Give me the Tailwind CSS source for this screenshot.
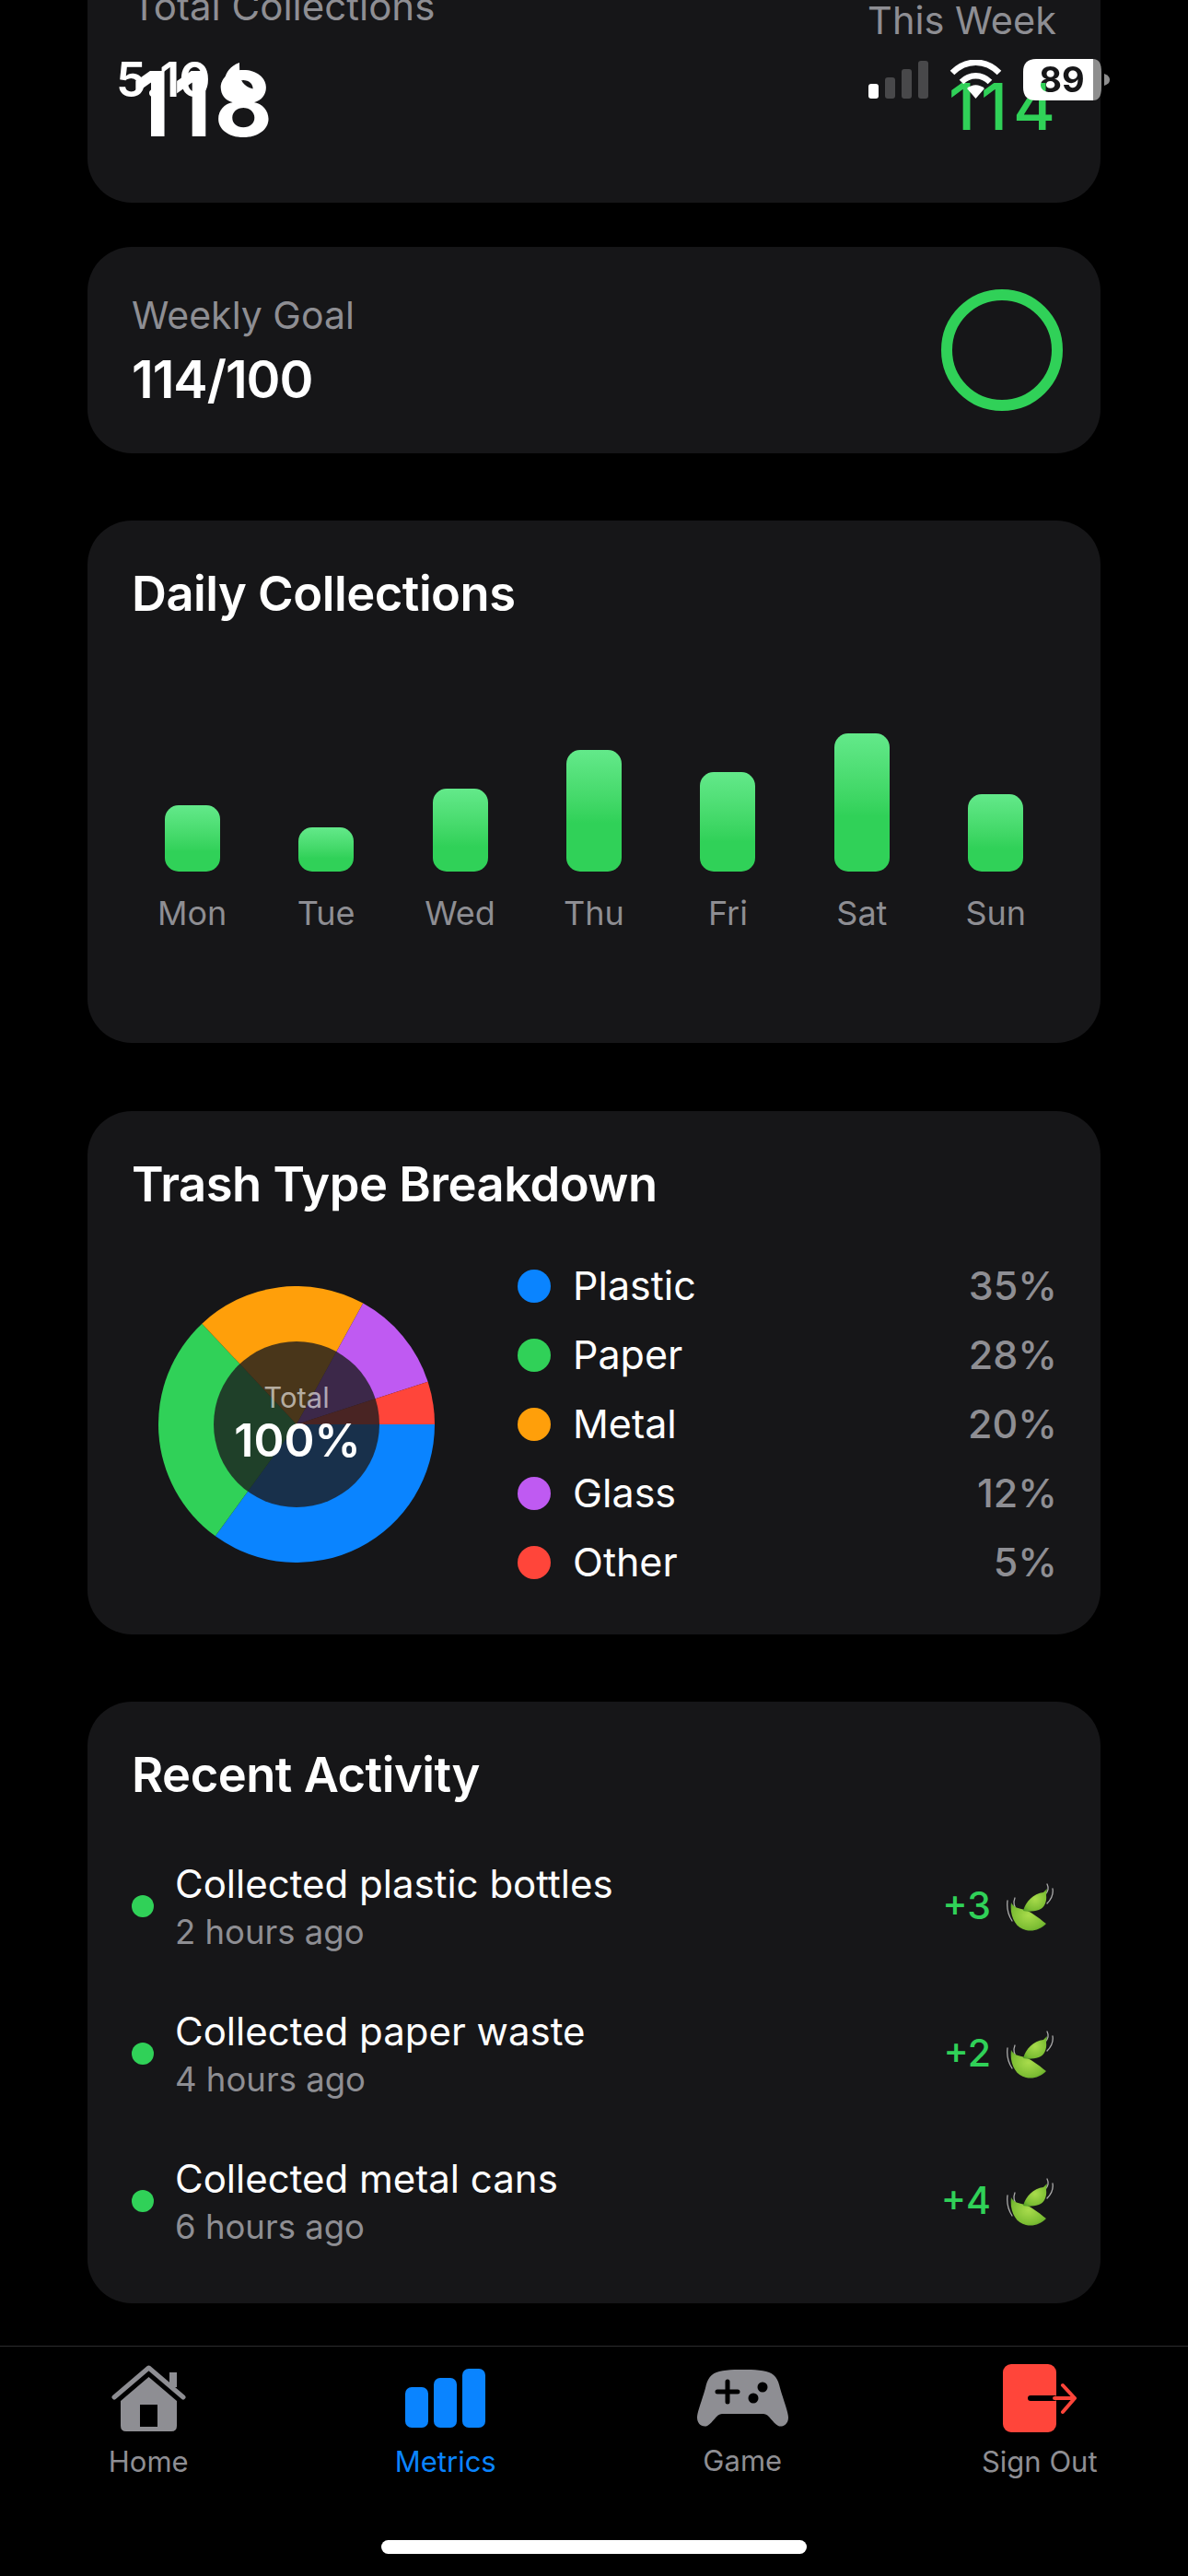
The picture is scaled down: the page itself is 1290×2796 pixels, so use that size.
<!DOCTYPE html>
<html lang="en">
<head>
<meta charset="utf-8">
<script src="https://cdn.jsdelivr.net/npm/@tailwindcss/browser@4"></script>
<title>Metrics</title>
</head>
<body class="bg-black">
<svg class="absolute w-0 h-0" aria-hidden="true">
  <defs>
    <radialGradient id="leafg" cx="0.5" cy="0.45" r="0.7">
      <stop offset="0" stop-color="#a9dc4c"/>
      <stop offset="0.7" stop-color="#7cbd33"/>
      <stop offset="1" stop-color="#4f9a24"/>
    </radialGradient>
    <symbol id="leaves" viewBox="0 0 52 53">
      <g fill="none" stroke="#ababab" stroke-width="1.3" stroke-linecap="round">
        <path d="M2 20 C1 28 3 36 7 42"/>
        <path d="M10 17 C8 22 9 27 13 32"/>
        <path d="M45 2 C47 6 46 10 43 13"/>
        <path d="M51 7 C52 13 49 19 45 23"/>
      </g>
      <path d="M6 22 C8 26 12 28 17 29 C27 31 35 38 44 45 C38 51 30 54 22 52 C11 50 4 37 6 22Z" fill="url(#leafg)"/>
      <path d="M19 31 C22 21 30 12 41 11 L45 7 L44 14 C45 21 42 28 36 30 C30 32 24 32 19 31Z" fill="url(#leafg)"/>
    </symbol>
  </defs>
</svg>

<div class="relative w-[1290px] h-[2796px] overflow-hidden bg-black text-white font-['Inter','Liberation_Sans',sans-serif] flex flex-col">

  <!-- scrolled content -->
  <main class="h-[2546px] overflow-hidden px-[95px] flex flex-col">
    <section class="shrink-0 h-[300px] -mt-[80px] rounded-[48px] bg-[#161618] px-[48px] pt-[62px] flex justify-between">
      <div>
        <p class="text-[42px] leading-[50px] text-[#8e8e93]">Total Collections</p>
        <p class="text-[97px] leading-[100px] font-bold mt-[31px] tracking-[3px]">118</p>
      </div>
      <div class="text-right pt-[15px]">
        <p class="text-[41.5px] leading-[50px] text-[#8e8e93]">This Week</p>
        <p class="text-[70px] leading-[80px] font-medium text-[#30d158] mt-[29px] tracking-[6px] -mr-[5px]">114</p>
      </div>
    </section>

    <section class="shrink-0 h-[224px] mt-[48px] rounded-[48px] bg-[#161618] px-[48px] flex items-center justify-between">
      <div>
        <p class="text-[41px] leading-[50px] text-[#8e8e93]">Weekly Goal</p>
        <p class="text-[56px] leading-[64px] font-semibold mt-[13px] tracking-[-1px]">114/100</p>
      </div>
      <div class="w-[132px] h-[132px] rounded-full border-[12px] border-[#30d158] -mr-[7px]"></div>
    </section>

    <section class="shrink-0 h-[567px] mt-[73px] rounded-[48px] bg-[#161618] px-[48px] pt-[48px]">
      <h2 class="text-[52.5px] leading-[62px] font-semibold tracking-[-0.5px]">Daily Collections</h2>
      <div class="grid grid-cols-7 -mx-[7px] h-[232px] mt-[39px] items-end">
        <div class="flex justify-center"><div class="w-[60px] h-[72px] rounded-[15px] bg-gradient-to-b from-[#63e98a] to-[#30d158] to-[70%]"></div></div>
        <div class="flex justify-center"><div class="w-[60px] h-[48px] rounded-[15px] bg-gradient-to-b from-[#63e98a] to-[#30d158] to-[70%]"></div></div>
        <div class="flex justify-center"><div class="w-[60px] h-[90px] rounded-[15px] bg-gradient-to-b from-[#63e98a] to-[#30d158] to-[70%]"></div></div>
        <div class="flex justify-center"><div class="w-[60px] h-[132px] rounded-[15px] bg-gradient-to-b from-[#63e98a] to-[#30d158] to-[60%]"></div></div>
        <div class="flex justify-center"><div class="w-[60px] h-[108px] rounded-[15px] bg-gradient-to-b from-[#63e98a] to-[#30d158] to-[70%]"></div></div>
        <div class="flex justify-center"><div class="w-[60px] h-[150px] rounded-[15px] bg-gradient-to-b from-[#63e98a] to-[#30d158] to-[60%]"></div></div>
        <div class="flex justify-center"><div class="w-[60px] h-[84px] rounded-[15px] bg-gradient-to-b from-[#63e98a] to-[#30d158] to-[70%]"></div></div>
      </div>
      <div class="grid grid-cols-7 -mx-[7px] mt-[24px] text-center text-[36px] leading-[42px] text-[#8e8e93]">
        <span>Mon</span><span>Tue</span><span>Wed</span><span>Thu</span><span>Fri</span><span>Sat</span><span>Sun</span>
      </div>
    </section>

    <section class="shrink-0 h-[568px] mt-[74px] rounded-[48px] bg-[#161618] px-[48px] pt-[48px]">
      <h2 class="text-[52.5px] leading-[62px] font-semibold tracking-[-0.5px]">Trash Type Breakdown</h2>
      <div class="flex mt-[80px]">
        <div class="relative shrink-0 w-[300px] h-[300px] ml-[29px]">
          <svg viewBox="0 0 300 300" class="w-[300px] h-[300px]">
            <path d="M150 150 L300 150 A150 150 0 0 1 61.83 271.35Z" fill="#0a84ff"/>
            <path d="M150 150 L61.83 271.35 A150 150 0 0 1 47.32 40.65Z" fill="#30d158"/>
            <path d="M150 150 L47.32 40.65 A150 150 0 0 1 222.27 18.55Z" fill="#ff9f0a"/>
            <path d="M150 150 L222.27 18.55 A150 150 0 0 1 292.66 103.65Z" fill="#bf5af2"/>
            <path d="M150 150 L292.66 103.65 A150 150 0 0 1 300 150Z" fill="#ff453a"/>
            <circle cx="150" cy="150" r="90" fill="#1c1c1e" fill-opacity="0.8"/>
          </svg>
          <div class="absolute inset-0 flex flex-col items-center justify-center">
            <span class="text-[31px] leading-[34px] text-white/60 -mt-[2px]">Total</span>
            <span class="text-[50px] leading-[54px] font-semibold mt-[2px] ml-[2px]">100%</span>
          </div>
        </div>
        <ul class="flex-1 ml-[90px] -mr-[1px] -mt-[38px] text-[43px]">
          <li class="flex items-center h-[75px]"><span class="w-[36px] h-[36px] rounded-full bg-[#0a84ff]"></span><span class="ml-[24px] flex-1">Plastic</span><span class="text-[#8e8e93] font-medium">35%</span></li>
          <li class="flex items-center h-[75px]"><span class="w-[36px] h-[36px] rounded-full bg-[#30d158]"></span><span class="ml-[24px] flex-1">Paper</span><span class="text-[#8e8e93] font-medium">28%</span></li>
          <li class="flex items-center h-[75px]"><span class="w-[36px] h-[36px] rounded-full bg-[#ff9f0a]"></span><span class="ml-[24px] flex-1">Metal</span><span class="text-[#8e8e93] font-medium">20%</span></li>
          <li class="flex items-center h-[75px]"><span class="w-[36px] h-[36px] rounded-full bg-[#bf5af2]"></span><span class="ml-[24px] flex-1">Glass</span><span class="text-[#8e8e93] font-medium">12%</span></li>
          <li class="flex items-center h-[75px]"><span class="w-[36px] h-[36px] rounded-full bg-[#ff453a]"></span><span class="ml-[24px] flex-1">Other</span><span class="text-[#8e8e93] font-medium">5%</span></li>
        </ul>
      </div>
    </section>

    <section class="shrink-0 h-[653px] mt-[73px] rounded-[48px] bg-[#161618] px-[48px] pt-[48px]">
      <h2 class="text-[52.5px] leading-[62px] font-semibold tracking-[-0.5px]">Recent Activity</h2>
      <ul class="mt-[32px]">
        <li class="flex items-center h-[160px]">
          <span class="w-[24px] h-[24px] rounded-full bg-[#30d158]"></span>
          <div class="ml-[23px] flex-1"><p class="text-[42px] leading-[50px]">Collected plastic bottles</p><p class="text-[36.5px] leading-[44px] text-[#8e8e93] mt-[5px]">2 hours ago</p></div>
          <span class="text-[41px] font-medium text-[#30d158]">+3</span>
          <svg class="w-[52px] h-[53px] ml-[16px] mr-[3px]"><use href="#leaves"/></svg>
        </li>
        <li class="flex items-center h-[160px]">
          <span class="w-[24px] h-[24px] rounded-full bg-[#30d158]"></span>
          <div class="ml-[23px] flex-1"><p class="text-[42px] leading-[50px]">Collected paper waste</p><p class="text-[36.5px] leading-[44px] text-[#8e8e93] mt-[5px]">4 hours ago</p></div>
          <span class="text-[41px] font-medium text-[#30d158]">+2</span>
          <svg class="w-[52px] h-[53px] ml-[16px] mr-[3px]"><use href="#leaves"/></svg>
        </li>
        <li class="flex items-center h-[160px]">
          <span class="w-[24px] h-[24px] rounded-full bg-[#30d158]"></span>
          <div class="ml-[23px] flex-1"><p class="text-[42px] leading-[50px]">Collected metal cans</p><p class="text-[36.5px] leading-[44px] text-[#8e8e93] mt-[5px]">6 hours ago</p></div>
          <span class="text-[41px] font-medium text-[#30d158]">+4</span>
          <svg class="w-[52px] h-[53px] ml-[16px] mr-[3px]"><use href="#leaves"/></svg>
        </li>
      </ul>
    </section>
  </main>

  <!-- tab bar -->
  <nav class="relative h-[250px] border-t border-[#2c2c2e] bg-black grid grid-cols-4">
    <a class="flex flex-col items-center pt-[20px] text-[#8e8e93]">
      <svg viewBox="0 0 81 72" class="w-[81px] h-[72px]">
        <path d="M3 35 L40.5 3 L78 35" fill="none" stroke="#8e8e93" stroke-width="5" stroke-linecap="round" stroke-linejoin="round"/>
        <rect x="63" y="8" width="8" height="16" fill="#8e8e93"/>
        <path fill-rule="evenodd" d="M40.5 13 L71 39 V66 Q71 72 65 72 H16 Q10 72 10 66 V39Z M31 43 V67 H50 V43Z" fill="#8e8e93"/>
      </svg>
      <span class="mt-[14px] text-[31px] leading-[38px]">Home</span>
    </a>
    <a class="flex flex-col items-center pt-[24px] text-[#0a84ff]">
      <svg viewBox="0 0 87 64" class="w-[87px] h-[64px] -ml-[1px]">
        <rect x="0" y="20" width="25" height="44" rx="7" fill="#0a84ff"/>
        <rect x="31" y="10" width="25" height="54" rx="7" fill="#0a84ff"/>
        <rect x="62" y="0" width="25" height="64" rx="7" fill="#0a84ff"/>
      </svg>
      <span class="mt-[18px] text-[31px] leading-[38px]">Metrics</span>
    </a>
    <a class="flex flex-col items-center pt-[25px] text-[#8e8e93]">
      <svg viewBox="0 0 99 62" class="w-[99px] h-[62px]">
        <path d="M24 2 C38 -1 61 -1 75 2 C84 4 88 10 90 20 C94 34 99 46 99 52 C99 60 92 63 88 61 C82 58 78 48 72 48 L27 48 C21 48 17 58 11 61 C7 63 0 60 0 52 C0 46 5 34 9 20 C11 10 15 4 24 2Z" fill="#8e8e93"/>
        <path d="M33 13 V35 M22 24 H44" stroke="#000" stroke-width="5" stroke-linecap="round"/>
        <circle cx="71" cy="19" r="5.5" fill="#000"/>
        <circle cx="61" cy="31" r="5.5" fill="#000"/>
      </svg>
      <span class="mt-[18px] text-[31px] leading-[38px]">Game</span>
    </a>
    <a class="flex flex-col items-center pt-[19px] text-[#8e8e93]">
      <svg viewBox="0 0 80 74" class="w-[80px] h-[74px]">
        <rect x="0" y="0" width="58" height="74" rx="9" fill="#ff453a"/>
        <path d="M30 37 H56" stroke="#000" stroke-width="6" stroke-linecap="round"/>
        <path d="M56 37 H78 M65 23 L78 37 L65 52" fill="none" stroke="#ff453a" stroke-width="4" stroke-linecap="round" stroke-linejoin="round"/>
      </svg>
      <span class="mt-[13px] text-[31px] leading-[38px]">Sign Out</span>
    </a>
    <span class="absolute left-[414px] top-[210px] w-[462px] h-[15px] rounded-full bg-white"></span>
  </nav>

  <!-- status bar overlay -->
  <div class="absolute inset-x-0 top-0 h-[120px]">
    <span class="absolute left-[126px] top-[56px] text-[52px] leading-[62px] font-semibold tracking-[-1px]">5:10</span>
    <svg viewBox="0 0 45 42" class="absolute left-[243px] top-[67px] w-[45px] h-[42px]">
      <path d="M17 1 C5 5 -1 16 1 27 C3 36 12 41 22 41 C30 41 37 37 41 30 C30 31 20 26 18 17 C17 11 17 5 17 1Z" fill="#fff"/>
    </svg>
    <div class="absolute left-[943px] top-[66px] h-[41px] w-[65px] flex items-end justify-between">
      <span class="w-[11px] h-[16px] rounded-[3px] bg-white"></span>
      <span class="w-[11px] h-[23px] rounded-[3px] bg-[#48484a]"></span>
      <span class="w-[11px] h-[32px] rounded-[3px] bg-[#48484a]"></span>
      <span class="w-[11px] h-[41px] rounded-[3px] bg-[#48484a]"></span>
    </div>
    <svg viewBox="0 0 57 42" class="absolute left-[1031px] top-[65px] w-[57px] h-[42px]">
      <path d="M3 14 C18 -1 39 -1 54 14" fill="none" stroke="#fff" stroke-width="6.5"/>
      <path d="M13 24 C22 15 35 15 44 24" fill="none" stroke="#fff" stroke-width="6.5"/>
      <path d="M28.5 42 L19 31 C25 26 32 26 38 31Z" fill="#fff"/>
    </svg>
    <svg viewBox="0 0 94 45" class="absolute left-[1111px] top-[64px] w-[94px] h-[45px]">
      <defs>
        <mask id="batt" maskUnits="userSpaceOnUse" x="0" y="0" width="94" height="45">
          <rect width="94" height="45" fill="#fff"/>
          <text x="42" y="36" text-anchor="middle" font-size="38" font-weight="700" fill="#000" class="font-['Inter',sans-serif]">89</text>
        </mask>
      </defs>
      <g mask="url(#batt)">
        <path d="M14 0 H76 V45 H14 Q0 45 0 31 V14 Q0 0 14 0Z" fill="#fff"/>
        <path d="M76 0 Q85 0 85 14 V31 Q85 45 76 45Z" fill="#8e8e8e"/>
      </g>
      <path d="M88 16 Q94 18 94 22.5 Q94 27 88 29Z" fill="#8e8e8e"/>
    </svg>
  </div>
</div>
</body>
</html>
